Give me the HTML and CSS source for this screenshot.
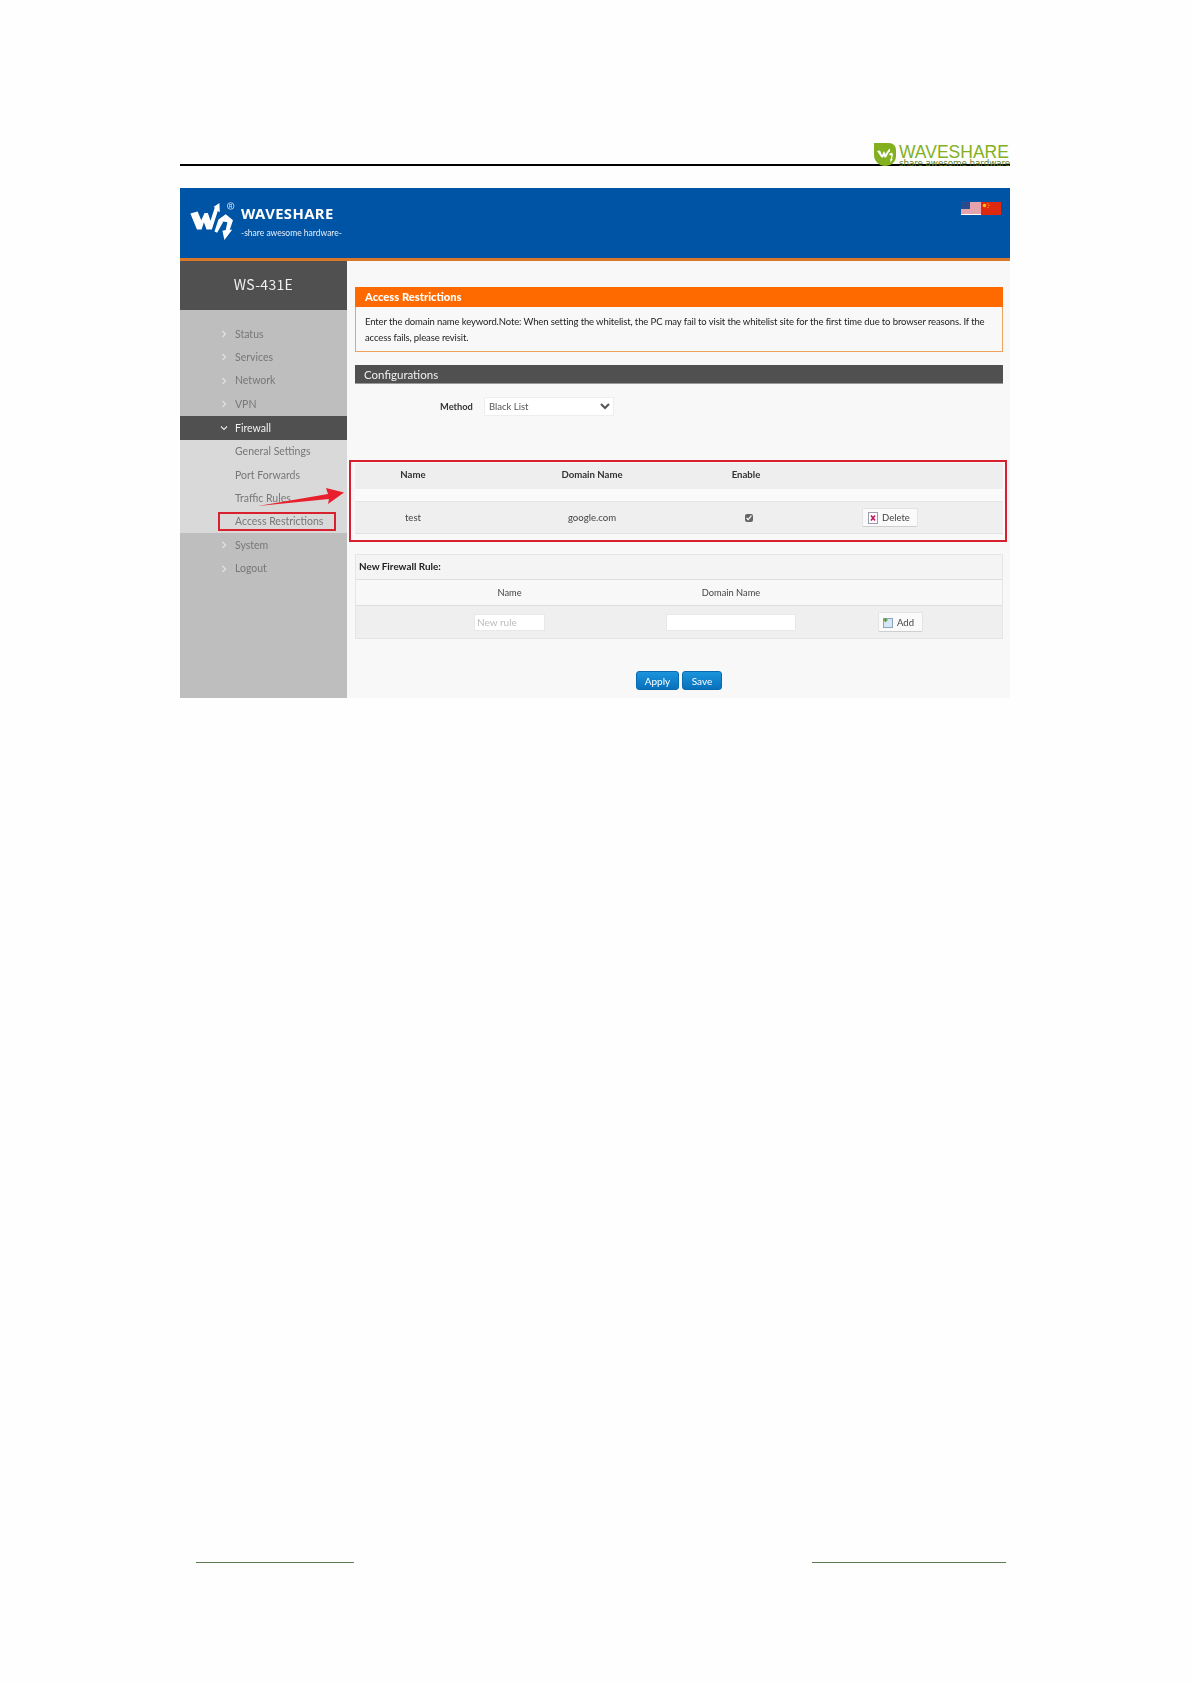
FILE: index.html
```html
<!DOCTYPE html>
<html lang="en">
<head>
<meta charset="utf-8">
<title>Access Restrictions</title>
<link rel="stylesheet" href="styles.css">
</head>
<body>
<div class="doc">
  <header class="doc-head">
    <div class="brand">
      <svg class="brand-mark" viewBox="0 0 22 23" width="22" height="23">
        <path fill="#82b01e" d="M0 0H15C19 0 22 3 22 7V13C22 19 17 23 11 23C5 23 0 18 0 12Z"/>
        <path fill="#fff" d="M3 8L6 7.500L8 12L10 8L11.500 11L15 6L16 6V9L15 9L12 14.500H10.500L9.800 13L8.800 14.500H7.500Z"/>
        <path fill="#fff" d="M15 11L18 9.500L19 11.500L18 16L18.800 16L16.500 19.500L16.200 16L17 15.500L17.400 12L16 12.500Z"/>
      </svg>
      <div class="brand-text">
        <div class="brand-name">WAVESHARE</div>
        <div class="brand-tag">share awesome hardware</div>
      </div>
    </div>
  </header>

  <div class="shot">
    <div class="top">
      <div class="logo">
        <svg class="logo-mark" viewBox="40 35 140 118" width="47" height="39">
          <path fill="#fff" d="M43 70L65 64L76 90L86 68L96 68L104 92L117 52L113 50L131 38L132 66L126 62L108 118L92 118L84 96L77 118L63 118Z"/>
          <path fill="#fff" d="M128 88L150 72L172 90L162 120L170 118L146 150L140 122L150 120L155 96L143 94L124 128L116 124Z"/>
          <circle cx="165" cy="47" r="10" fill="none" stroke="#fff" stroke-width="2"/>
          <text x="165" y="53" text-anchor="middle" class="reg">R</text>
        </svg>
        <div class="logo-text">
          <div class="logo-name">WAVESHARE</div>
          <div class="logo-tag">-share awesome hardware-</div>
        </div>
      </div>
      <div class="flags">
        <svg viewBox="0 0 20 13" width="20" height="13">
          <rect width="20" height="13" fill="#fff"/>
          <path d="M0 1H20M0 3H20M0 5H20M0 7H20M0 9H20M0 11H20" stroke="#c8475a" stroke-width="1"/>
          <rect width="9" height="7" fill="#2d4a8c"/>
        </svg>
        <svg viewBox="0 0 20 13" width="20" height="13">
          <rect width="20" height="13" fill="#de2910"/>
          <circle cx="3.500" cy="3.500" r="1.700" fill="#f5c518"/>
          <circle cx="7" cy="1.800" r=".6" fill="#f5c518"/>
          <circle cx="8" cy="3.500" r=".6" fill="#f5c518"/>
          <circle cx="7" cy="5.500" r=".6" fill="#f5c518"/>
        </svg>
      </div>
    </div>

    <div class="main">
      <aside class="side">
        <div class="side-title">WS-431E</div>
        <nav class="menu">
          <a class="item"><svg class="chev" viewBox="0 0 8 8"><path d="M2.500 1L5.500 4L2.500 7"/></svg>Status</a>
          <a class="item"><svg class="chev" viewBox="0 0 8 8"><path d="M2.500 1L5.500 4L2.500 7"/></svg>Services</a>
          <a class="item"><svg class="chev" viewBox="0 0 8 8"><path d="M2.500 1L5.500 4L2.500 7"/></svg>Network</a>
          <a class="item"><svg class="chev" viewBox="0 0 8 8"><path d="M2.500 1L5.500 4L2.500 7"/></svg>VPN</a>
          <a class="item item-open"><svg class="chev" viewBox="0 0 8 8"><path d="M1 2.500L4 5.500L7 2.500"/></svg>Firewall</a>
          <div class="sub">
            <a class="item">General Settings</a>
            <a class="item">Port Forwards</a>
            <a class="item">Traffic Rules</a>
            <a class="item">Access Restrictions</a>
          </div>
          <a class="item"><svg class="chev" viewBox="0 0 8 8"><path d="M2.500 1L5.500 4L2.500 7"/></svg>System</a>
          <a class="item"><svg class="chev" viewBox="0 0 8 8"><path d="M2.500 1L5.500 4L2.500 7"/></svg>Logout</a>
        </nav>
      </aside>

      <section class="content">
        <div class="notice">
          <h2 class="notice-head">Access Restrictions</h2>
          <p class="notice-body">Enter the domain name keyword.Note: When setting the whitelist, the PC may fail to visit the whitelist site for the first time due to browser reasons. If the access fails, please revisit.</p>
        </div>

        <h3 class="bar">Configurations</h3>

        <div class="method">
          <label class="method-label" for="m">Method</label>
          <select class="method-select" id="m"><option>Black List</option></select>
        </div>

        <div class="rules">
          <div class="rules-head">
            <span>Name</span><span>Domain Name</span><span>Enable</span>
          </div>
          <div class="rules-gap"></div>
          <div class="rules-row">
            <span>test</span><span>google.com</span>
            <span class="check-cell"><input class="check" type="checkbox" checked></span>
            <span class="btn-cell">
              <button class="btn" type="button">
                <svg viewBox="0 0 10 12" width="10" height="12"><rect x=".5" y=".5" width="9" height="11" fill="#fff" stroke="#9a9ab0"/><path d="M3 3.500L7 8.500M7 3.500L3 8.500" stroke="#c2185b" stroke-width="1.600"/></svg>
                Delete
              </button>
            </span>
          </div>
        </div>

        <div class="newrule">
          <div class="newrule-title">New Firewall Rule:</div>
          <div class="newrule-head"><span>Name</span><span>Domain Name</span><span></span></div>
          <div class="newrule-row">
            <span><input class="field field-name" type="text" placeholder="New rule"></span>
            <span><input class="field field-domain" type="text"></span>
            <span class="add-cell">
              <button class="btn btn-add" type="button">
                <svg viewBox="0 0 12 12" width="12" height="12"><rect x="1.500" y="2.500" width="9" height="9" fill="#d6e6f2" stroke="#8aa7bd"/><path d="M3.500 2V6M1.500 4H5.500" stroke="#5a9a32" stroke-width="1.500"/></svg>
                Add
              </button>
            </span>
          </div>
        </div>

        <div class="actions">
          <button class="action action-apply" type="button">Apply</button>
          <button class="action action-save" type="button">Save</button>
        </div>
      </section>
    </div>

    <div class="mark mark-sub"></div>
    <div class="mark mark-table"></div>
    <svg class="arrow" viewBox="0 0 90 20" width="90" height="20">
      <path fill="#e8202e" d="M0 18L70 6L68 0L86 4.500L70 16L71 11Z"/>
    </svg>
  </div>

  <footer class="doc-foot">
    <span class="foot-line foot-left"></span>
    <span class="foot-line foot-right"></span>
  </footer>
</div>
</body>
</html>
```

FILE: styles.css
```css
* { box-sizing: border-box; }
html, body { margin: 0; padding: 0; background: #fefefe; }
body { font-family: Lato, "Noto Sans", sans-serif; color: #333; }

.doc { width: 1191px; height: 1684px; padding: 143px 181px 0 180px; }

.doc-head { height: 23px; border-bottom: 2px solid #000; display: flex; justify-content: flex-end; }
.brand { display: flex; gap: 3px; margin-right: -2px; height: 23px; }
.brand-text { width: 113px; padding-top: 2px; }
.brand-name { font: 400 17.500px/14px "Liberation Sans", sans-serif; color: #82b01e; white-space: nowrap; }
.brand-tag { font: 400 8.800px/8px "DejaVu Sans", sans-serif; color: #5f7d24; white-space: nowrap; letter-spacing: -.1px; }

.shot { position: relative; margin-top: 22px; width: 830px; height: 510px; background: #f8f8f8; display: flex; flex-direction: column; filter: blur(.3px); }

.top { height: 73px; background: #0054a6; border-bottom: 3px solid #d9772a; display: flex; justify-content: space-between; padding: 14px 9px 0 9px; flex: none; }
.logo { display: flex; gap: 5px; align-items: flex-start; height: 44px; }
.reg { font: 400 14px "Liberation Sans", sans-serif; fill: #fff; }
.logo-text { color: #fff; padding-top: 1px; }
.logo-name { font: 700 14.800px/21px "Noto Sans", sans-serif; letter-spacing: .4px; }
.logo-tag { font: 400 8.500px/18px Lato, sans-serif; color: #e6eef8; white-space: nowrap; }
.flags { display: flex; gap: 0; }
.flags svg { display: block; }

.main { display: flex; flex: 1; min-height: 0; }

.side { width: 167px; background: #bebebe; flex: none; }
.side-title { height: 49px; padding-bottom: 4px; background: #505050; color: #f0f0f0; display: flex; align-items: center; justify-content: center; font: 400 14px "Noto Sans CJK SC", sans-serif; letter-spacing: .3px; }
.menu { padding-top: 12px; }
.item { display: flex; align-items: center; height: 23.400px; padding-left: 55px; position: relative; font-size: 10.500px; color: #777; }
.chev { position: absolute; left: 40px; top: 8px; width: 8px; height: 8px; fill: none; stroke: #e2e2e2; stroke-width: 1.200; }
.item-open { background: #505050; color: #f2f2f2; height: 24px; }
.item-open .chev { stroke: #e6e6e6; }
.sub { background: #d9d9d9; }

.content { flex: 1; padding: 26px 7px 0 8px; }

.notice { border: 1px solid #eda45a; border-top: 0; height: 65px; }
.notice-head { margin: 0 -1px; height: 20px; background: #ff6a00; color: #fff; font-size: 11.200px; font-weight: 900; line-height: 19px; padding-left: 10px; }
.notice-body { margin: 0; padding: 7px 9px 0 9px; font-size: 9.500px; letter-spacing: -.12px; line-height: 16px; color: #222; }

.bar { margin: 13px 0 0; height: 19px; background: #505050; border-bottom: 1px solid #999; color: #f0f0f0; font-size: 11.500px; font-weight: 400; line-height: 19px; padding-left: 9px; }

.method { display: flex; align-items: center; gap: 12px; height: 19px; margin-top: 13px; padding-left: 85px; }
.method-label { width: 32px; flex: none; font-size: 9.300px; font-weight: 700; color: #333; white-space: nowrap; }
.method-select { width: 130px; height: 19px; border: 1px solid #eee; background: #fff; color: #555; font: 400 9.500px Lato, sans-serif; padding: 0; border-radius: 0; }

.rules { margin-top: 47px; font-size: 9.600px; }
.rules-head, .rules-row { display: grid; grid-template-columns: 116px 242px 66px 1fr; align-items: center; text-align: center; }
.rules-head { height: 26px; padding-bottom: 4px; background: #eeeeee; font-weight: 700; color: #333; }
.rules-gap { height: 13px; background: #fafafa; border-bottom: 1px solid #e6e6e6; }
.rules-row { height: 32px; background: #efefef; border-bottom: 1px solid #e2e2e2; color: #444; }
.check-cell { display: flex; justify-content: center; padding-left: 6px; }
.check { margin: 0; width: 8px; height: 8px; accent-color: #666; }
.btn-cell { display: flex; padding-left: 83px; }
.btn { display: inline-flex; align-items: center; gap: 4px; background: #fafafa; border: 1px solid #e3e3e3; border-bottom-color: #cfcfcf; border-radius: 2px; height: 19px; width: 56px; padding: 0 0 0 5px; color: #444; font: 400 9.500px Lato, sans-serif; }

.newrule { margin-top: 20px; border: 1px solid #e6e6e6; border-bottom: 0; font-size: 9.300px; }
.newrule-title { height: 25px; background: #f4f4f4; border-bottom: 1px solid #dedede; font-weight: 700; font-size: 9.900px; line-height: 23px; padding-left: 3px; color: #222; }
.newrule-head, .newrule-row { display: grid; grid-template-columns: 307px 136px 1fr; align-items: center; text-align: center; }
.newrule-head { height: 26px; border-bottom: 1px solid #dedede; color: #444; }
.newrule-row { height: 33px; background: #efefef; border-bottom: 1px solid #e4e4e4; }
.field { display: block; margin: 0 auto; height: 17px; border: 1px solid #e8e8e8; background: #fff; padding: 0 2px; font: 400 10px Lato, sans-serif; }
.field::placeholder { color: #bbb; }
.field-name { width: 71px; }
.field-domain { width: 130px; }
.add-cell { display: flex; padding-left: 79px; }
.btn-add { width: 45px; height: 20px; gap: 3px; padding-left: 3px; }

.actions { margin-top: 32px; display: flex; justify-content: center; gap: 3px; }
.action { height: 19px; border: 1px solid #0a6ab0; border-radius: 3px; color: #fff; font: 400 10px Lato, sans-serif; padding: 0; background: linear-gradient(#1a94dc, #0a70bc); }
.action-apply { width: 43px; }
.action-save { width: 40px; }

.mark { position: absolute; border: 2px solid #d8212f; }
.mark-sub { left: 38px; top: 324px; width: 118px; height: 19px; }
.mark-table { left: 169px; top: 272px; width: 658px; height: 82px; }
.arrow { position: absolute; left: 78px; top: 300px; overflow: visible; }

.doc-foot { display: flex; padding-top: 864px; }
.foot-line { display: block; height: 1px; background: #5e7a50; }
.foot-left { width: 158px; margin-left: 16px; }
.foot-right { width: 194px; margin-left: 458px; }
```
